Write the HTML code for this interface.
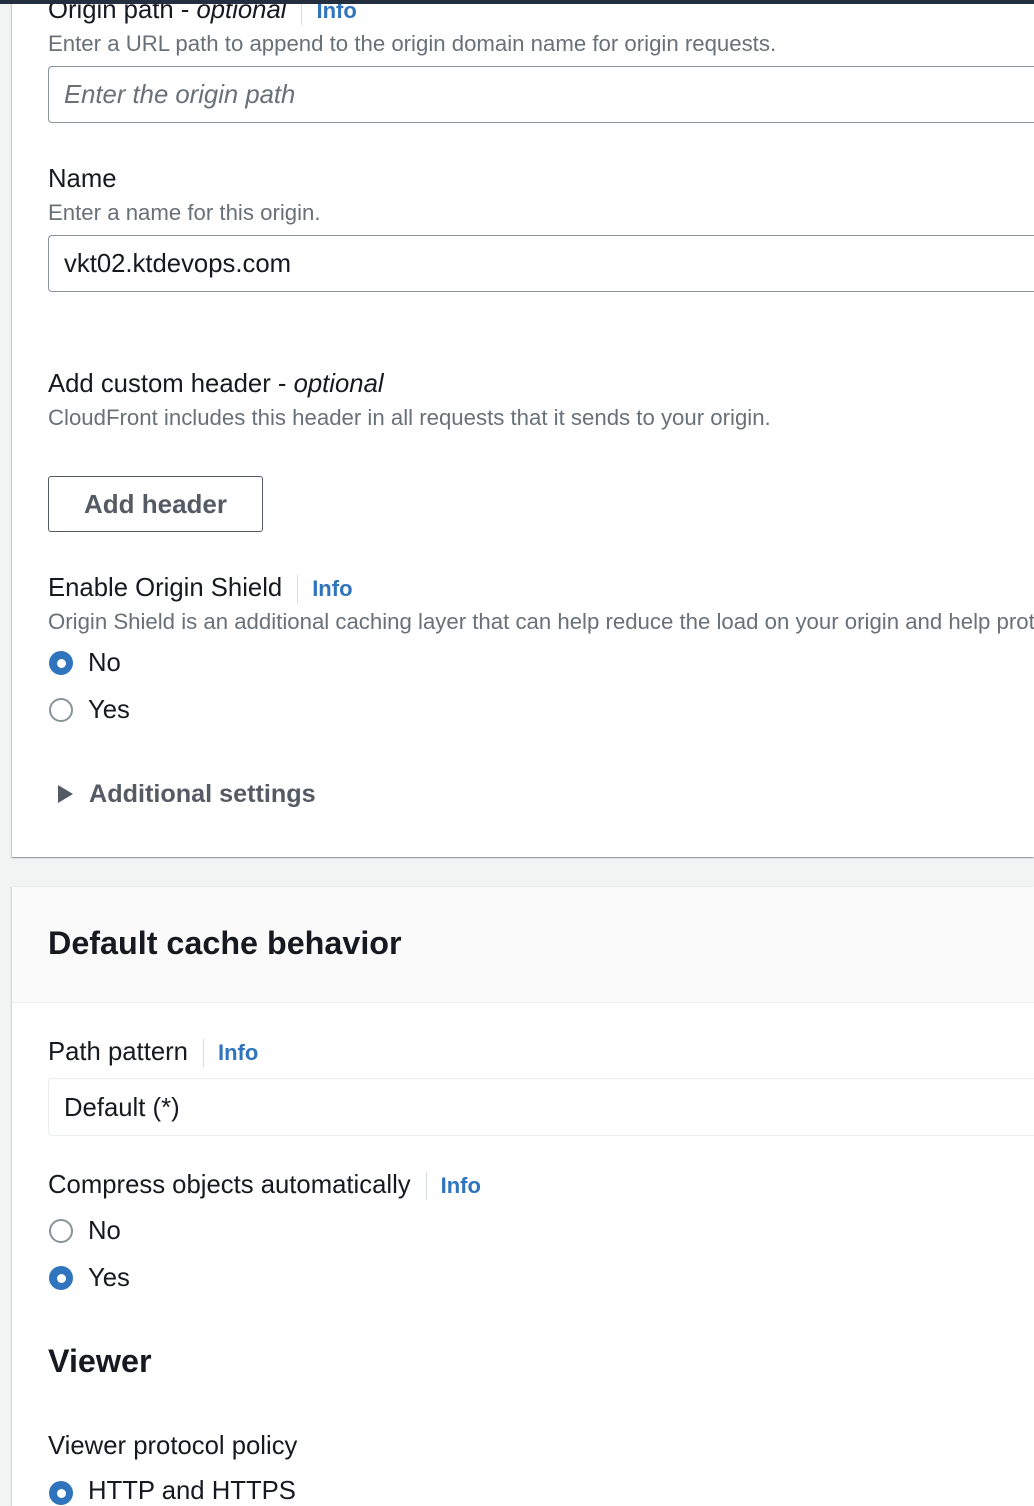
<!DOCTYPE html>
<html><head><meta charset="utf-8"><style>
html,body{margin:0;padding:0;}
body{width:1034px;height:1506px;position:relative;overflow:hidden;background:#f2f3f3;font-family:"Liberation Sans",sans-serif;color:#16191f;}
.abs{position:absolute;white-space:nowrap;}
.card{position:absolute;left:12px;width:1022px;background:#fff;}
.lbl{font-size:25.7px;line-height:30px;color:#16191f;}
.desc{font-size:22.2px;line-height:26px;color:#687078;}
.info{color:#2f74bc;font-weight:bold;font-size:22px;}
.sep{display:inline-block;width:1px;height:28px;background:#d5dbdb;vertical-align:middle;margin:0 14px 0 15px;}
.input{position:absolute;left:48px;width:986px;border:1px solid #879596;border-right:none;border-radius:4px 0 0 4px;background:#fff;box-sizing:border-box;}
.rad{position:absolute;left:49px;width:24px;height:24px;border-radius:50%;box-sizing:border-box;}
.off{border:2px solid #879596;background:#fff;}
.on{background:#2f74bc;}
.on::after{content:"";position:absolute;left:7.5px;top:7.5px;width:9px;height:9px;border-radius:50%;background:#fff;}
.h{font-size:32.3px;font-weight:bold;line-height:40px;}
.clip{position:absolute;left:0;top:0;width:1034px;height:1506px;overflow:hidden;}
</style></head><body><div class="clip">
<div class="abs" style="left:0;top:0;width:1034px;height:4px;background:#232f3e;z-index:5"></div>
<div class="card" style="top:0;height:857px;box-shadow:0 1px 1px 0 rgba(0,28,36,.35),-1px 1px 1px 0 rgba(0,28,36,.15);"></div>

<div class="abs lbl" style="left:48px;top:-5px;">Origin path - <i>optional</i><span class="sep"></span><span class="info">Info</span></div>
<div class="abs desc" style="left:48px;top:31px;">Enter a URL path to append to the origin domain name for origin requests.</div>
<div class="input" style="top:66px;height:57px;"></div>
<div class="abs" style="left:64px;top:80px;font-size:25.7px;line-height:30px;color:#687078;font-style:italic;">Enter the origin path</div>

<div class="abs lbl" style="left:48px;top:164px;">Name</div>
<div class="abs desc" style="left:48px;top:200px;">Enter a name for this origin.</div>
<div class="input" style="top:235px;height:57px;"></div>
<div class="abs" style="left:64px;top:249px;font-size:25.7px;line-height:30px;">vkt02.ktdevops.com</div>

<div class="abs lbl" style="left:48px;top:369px;">Add custom header - <i>optional</i></div>
<div class="abs desc" style="left:48px;top:405px;">CloudFront includes this header in all requests that it sends to your origin.</div>
<div class="abs" style="left:48px;top:476px;width:215px;height:56px;border:1px solid #545b64;border-radius:3px;box-sizing:border-box;text-align:center;line-height:54px;font-size:26px;font-weight:bold;color:#545b64;">Add header</div>

<div class="abs lbl" style="left:48px;top:573px;">Enable Origin Shield<span class="sep"></span><span class="info">Info</span></div>
<div class="abs desc" style="left:48px;top:609px;">Origin Shield is an additional caching layer that can help reduce the load on your origin and help protect its availability.</div>
<div class="rad on" style="top:651px;"></div>
<div class="abs lbl" style="left:88px;top:648px;">No</div>
<div class="rad off" style="top:698px;"></div>
<div class="abs lbl" style="left:88px;top:695px;">Yes</div>

<svg class="abs" style="left:57px;top:784px" width="17" height="20"><path d="M1 1 L16 10 L1 19 Z" fill="#545b64"/></svg>
<div class="abs" style="left:89px;top:779px;font-size:25.2px;line-height:30px;font-weight:bold;color:#545b64;">Additional settings</div>

<div class="card" style="top:887px;height:619px;box-shadow:-1px 0 1px 0 rgba(0,28,36,.15);"></div>
<div class="abs" style="left:12px;top:887px;width:1022px;height:115px;background:#fafafa;border-bottom:1px solid #eaeded;"></div>
<div class="abs h" style="left:48px;top:923px;">Default cache behavior</div>

<div class="abs lbl" style="left:48px;top:1037px;">Path pattern<span class="sep"></span><span class="info">Info</span></div>
<div class="input" style="top:1078px;height:58px;border-color:#eaeded;"></div>
<div class="abs" style="left:64px;top:1093px;font-size:25.7px;line-height:30px;">Default (*)</div>

<div class="abs lbl" style="left:48px;top:1170px;">Compress objects automatically<span class="sep"></span><span class="info">Info</span></div>
<div class="rad off" style="top:1219px;"></div>
<div class="abs lbl" style="left:88px;top:1216px;">No</div>
<div class="rad on" style="top:1266px;"></div>
<div class="abs lbl" style="left:88px;top:1263px;">Yes</div>

<div class="abs h" style="left:48px;top:1341px;">Viewer</div>
<div class="abs lbl" style="left:48px;top:1431px;">Viewer protocol policy</div>
<div class="rad on" style="top:1481px;"></div>
<div class="abs lbl" style="left:88px;top:1476px;">HTTP and HTTPS</div>
</div></body></html>
